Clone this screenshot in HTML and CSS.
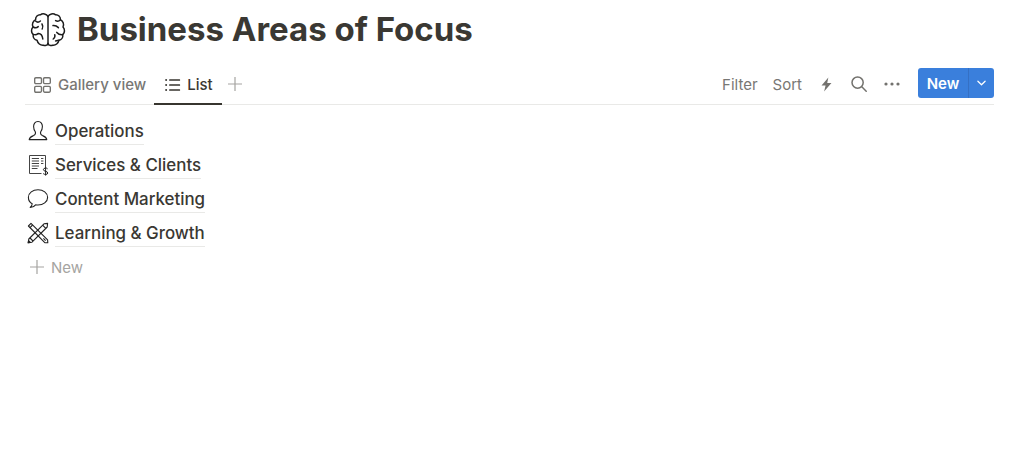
FILE: index.html
```html
<!DOCTYPE html>
<html lang="en">
<head>
<meta charset="utf-8">
<title>Business Areas of Focus</title>
<link rel="stylesheet" href="styles.css">
</head>
<body>
<main class="page">
  <header class="title-row">
    <svg class="brain" viewBox="0 0 36 36" fill="none" stroke="#1c1c1c" stroke-width="1.5" stroke-linecap="round" stroke-linejoin="round">
      <path d="M18 4V33"/>
      <path d="M18 4.5C16.6 1.8 12.6 1 10.4 2.8C7.8 2.6 5.4 4.8 5.6 7.6C3 9 1.6 12.4 3 15C1 17 1 20.8 3.2 22.6C2.8 25.4 4.6 27.8 7 28.2C7.6 31.2 10.4 33.6 13.4 33.2C15.2 33.8 17.4 33.2 18 31.5"/>
      <path d="M18 4.5C19.4 1.8 23.4 1 25.6 2.8C28.2 2.6 30.6 4.8 30.4 7.6C33 9 34.4 12.4 33 15C35 17 35 20.8 32.8 22.6C33.2 25.4 31.4 27.8 29 28.2C28.4 31.2 25.6 33.6 22.6 33.2C20.8 33.8 18.6 33.2 18 31.5"/>
      <path d="M5.6 9C6.8 10.2 9 10.2 10.4 9M3.2 15C5 16 7 15.8 8.2 14.6M12 12C13 13.6 13 15.4 12.2 17M3.4 22.4C5 23 6.6 22.8 8 21.6C10.4 21.4 12.4 23.6 12.8 27"/>
      <path d="M25.6 8.6C27 9.4 29 9.2 30.4 8M23 13.6C25 13.4 27 14.2 28.4 15.6M32.6 22.6C30.4 22.8 28 21.8 26.8 20.4M23.2 27C24.6 26 25.2 24.4 24.8 22.8M25.6 29C26.6 28.6 27.8 28.2 29 28.2"/>
    </svg>
    <h1 class="title">Business Areas of Focus</h1>
  </header>

  <nav class="toolbar">
    <div class="tabs">
      <a class="tab">
        <svg class="tab-icon" viewBox="1 1.4 15 14" fill="none" stroke="#73726e" stroke-width="1.2"><rect x="1.6" y="2" width="6" height="5.2" rx="1"/><rect x="9.4" y="2" width="6" height="5.2" rx="1"/><rect x="1.6" y="9.6" width="6" height="5.2" rx="1"/><rect x="9.4" y="9.6" width="6" height="5.2" rx="1"/></svg>
        Gallery view
      </a>
      <a class="tab tab-active">
        <svg class="tab-icon" viewBox="0 0 16 16" fill="#37352f"><circle cx="1.6" cy="3" r="1"/><circle cx="1.6" cy="8" r="1"/><circle cx="1.6" cy="13" r="1"/><rect x="4.6" y="2.3" width="11" height="1.4" rx=".5"/><rect x="4.6" y="7.3" width="11" height="1.4" rx=".5"/><rect x="4.6" y="12.3" width="11" height="1.4" rx=".5"/></svg>
        List
      </a>
      <svg class="add-view" viewBox="0 0 14 14" stroke="#a5a4a1" stroke-width="1.2"><path d="M7 0V14M0 7H14"/></svg>
    </div>
    <div class="actions">
      <span class="action">Filter</span>
      <span class="action action-last">Sort</span>
      <svg class="act-icon bolt" viewBox="0 0 12 16" fill="#73726e"><path d="M8 0.3L0.6 9.2H5L3.4 15.7L11.4 6.4H6.8Z"/></svg>
      <svg class="act-icon search" viewBox="0 0 16 16" fill="none" stroke="#73726e" stroke-width="1.5" stroke-linecap="round"><circle cx="6.6" cy="6.6" r="5.6"/><path d="M10.8 10.8L15.2 15.2"/></svg>
      <svg class="act-icon more" viewBox="0 0 16 4" fill="#73726e"><circle cx="2" cy="2" r="1.6"/><circle cx="8" cy="2" r="1.6"/><circle cx="14" cy="2" r="1.6"/></svg>
      <div class="new-btn">
        <span class="new-label">New</span>
        <span class="new-caret"><svg class="caret" viewBox="0 0 10 6" fill="none" stroke="#fff" stroke-width="1.4" stroke-linecap="round" stroke-linejoin="round"><path d="M1 1L5 5L9 1"/></svg></span>
      </div>
    </div>
  </nav>

  <ul class="list">
    <li class="item">
      <svg class="item-icon" viewBox="0 0 22 22" fill="none" stroke="#222" stroke-width="1.1" stroke-linejoin="round"><path d="M11 1.5C7.8 1.5 6.6 4 6.6 6.6C6.6 9.2 7.6 11 8.4 12C8.8 13.6 8.2 14.8 6.6 15.6C4.8 16.4 2.6 17 2.2 19.6H19.8C19.4 17 17.2 16.4 15.4 15.6C13.8 14.8 13.2 13.6 13.6 12C14.4 11 15.4 9.2 15.4 6.6C15.4 4 14.2 1.5 11 1.5Z"/></svg>
      <span class="item-name">Operations</span>
    </li>
    <li class="item">
      <svg class="item-icon" viewBox="0 0 22 22" fill="none" stroke="#444" stroke-width="1"><path d="M14.5 19.5H2.5V1.5H18.5V13"/><path d="M4.8 4.5H12M4.8 7H12M4.8 9.5H12M4.8 12H12M4.8 14.5H10.5M14 4.5H16.4M14 7H16.4M14 9.5H16.4"/><path d="M20.6 14.8C19.6 13.6 16.4 13.8 16.4 15.7C16.4 17.6 20.8 17 20.8 19C20.8 20.8 17.4 20.8 16.2 19.6M18.6 12.8V21.6" stroke="#222"/></svg>
      <span class="item-name">Services &amp; Clients</span>
    </li>
    <li class="item">
      <svg class="item-icon" viewBox="0 0 22 22" fill="none" stroke="#222" stroke-width="1.1" stroke-linejoin="round"><path d="M11 1.8C5.8 1.8 1.4 4.8 1.4 9.4C1.4 12.2 3 14.4 5.2 15.7C5.1 17.2 4.4 18.4 3.2 19.4C5.4 19.4 7.4 18.4 8.6 16.8C9.4 16.9 10.2 17 11 17C16.2 17 20.6 14 20.6 9.4C20.6 4.8 16.2 1.8 11 1.8Z"/></svg>
      <span class="item-name">Content Marketing</span>
    </li>
    <li class="item">
      <svg class="item-icon" viewBox="0 0 22 22" fill="none" stroke="#222" stroke-width="1.1" stroke-linejoin="round"><path d="M1.4 4L4 1.4L20.6 17.8L20.8 20.8L17.8 20.6Z"/><path d="M3 5.6L5.6 3M16.4 16.4L18.6 18.6"/><path d="M20.6 1.4L17 1.8L1.8 17L1.2 20.8L5 20.2L20.2 5Z"/><path d="M15.6 3.2L18.8 6.4M3 16L6 19"/><path d="M1.2 20.8L1.6 18.6L3.4 20.4Z" fill="#222"/></svg>
      <span class="item-name">Learning &amp; Growth</span>
    </li>
  </ul>

  <div class="add-row">
    <svg class="add-icon" viewBox="0 0 14 14" stroke="#a5a4a1" stroke-width="1.2"><path d="M7 0V14M0 7H14"/></svg>
    <span>New</span>
  </div>
</main>
</body>
</html>
```

FILE: styles.css
```css
* { box-sizing: border-box; }
html, body { margin: 0; height: 100%; background: #fff; }
body {
  font-family: Inter, "Liberation Sans", sans-serif;
  color: #37352f;
  overflow: hidden;
}
.page { padding: 10px 30px 0 25px; }
.title-row { display: flex; align-items: center; height: 40px; gap: 11px; padding-left: 5px; }
.brain { width: 36px; height: 36px; flex: none; }
.title { margin: 0 0 2px; font-size: 33px; line-height: 38px; font-weight: 700; color: #3a3833; }

.toolbar {
  display: flex; justify-content: space-between; align-items: stretch;
  height: 38px; margin-top: 17px; border-bottom: 1px solid #e9e9e7;
}
.tabs, .actions { display: flex; align-items: center; }
.tab {
  display: flex; align-items: center; gap: 7px; height: 38px;
  font-size: 15px; font-weight: 500; color: #787774; padding: 0 9px 3px;
  margin-bottom: -1px;
}
.tab-icon { width: 17px; height: 16px; flex: none; }
.tab-active {
  color: #3a3833; border-bottom: 2px solid #37352f;
  margin-left: -1px; padding: 0 9px 1px 10px; gap: 6px;
}
.add-view { width: 14px; height: 14px; margin: 0 0 3px 6px; }

.action { font-size: 15px; color: #787774; margin: 0 15px 3px 0; }
.action-last { margin-right: 19px; }
.act-icon { flex: none; margin-bottom: 3px; }
.bolt { width: 11px; height: 15px; margin-right: 19px; }
.search { width: 16px; height: 16px; margin-right: 17px; }
.more { width: 16px; height: 4px; margin-right: 18px; }
.new-btn {
  display: flex; width: 76px; height: 30px; border-radius: 3px;
  background: #3a7fdc; color: #fff; font-size: 15px; font-weight: 600;
  margin-top: -5px;
}
.new-label { flex: 1; display: flex; align-items: center; justify-content: center; }
.new-caret { width: 26px; display: flex; align-items: center; justify-content: center; border-left: 1px solid #3570c4; }
.caret { width: 9px; height: 6px; }

.list { list-style: none; margin: 9px 0 0; padding: 0; }
.item { display: flex; align-items: flex-start; height: 34px; gap: 6px; padding-left: 2px; }
.item-icon { width: 22px; height: 22px; flex: none; margin-top: 6px; }
.item-name {
  font-size: 16.9px; font-weight: 500; line-height: 24px; margin-top: 5px; height: 26px;
  border-bottom: 1px solid #e9e9e7; color: #3a3833;
}
.add-row { display: flex; align-items: center; gap: 7px; height: 34px; padding-left: 5px; color: #a5a4a1; font-size: 15px; }
.add-icon { width: 14px; height: 14px; }
```
